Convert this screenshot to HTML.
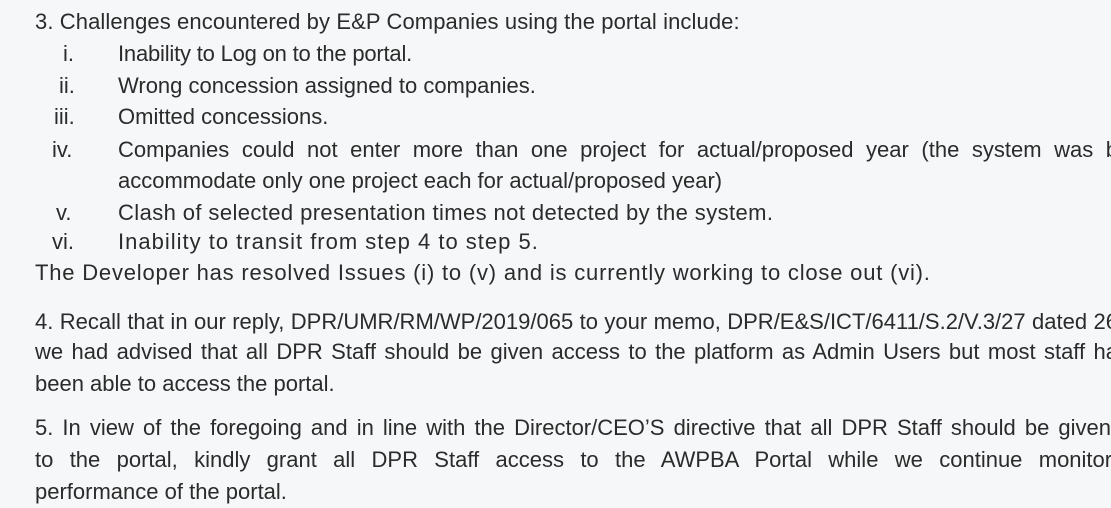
<!DOCTYPE html>
<html><head><meta charset="utf-8"><style>
html,body{margin:0;padding:0}
body{width:1111px;height:508px;overflow:hidden;background:#f6f7f8;position:relative;font-family:"Liberation Sans",sans-serif;font-size:22px;color:#2b2b2b}
.l{position:absolute;white-space:nowrap;line-height:24px}
.j{text-align:justify;text-align-last:justify}
.n{position:absolute;line-height:24px}
</style></head><body>
<div class="l" style="left:35px;top:10px;letter-spacing:0.1px">3. Challenges encountered by E&amp;P Companies using the portal include:</div>
<div class="n" style="left:63px;top:42px">i.</div><div class="l" style="left:118px;top:42px;letter-spacing:-0.2px">Inability to Log on to the portal.</div>
<div class="n" style="left:59px;top:74px">ii.</div><div class="l" style="left:118px;top:74px">Wrong concession assigned to companies.</div>
<div class="n" style="left:54px;top:105px">iii.</div><div class="l" style="left:118px;top:105px">Omitted concessions.</div>
<div class="n" style="left:52px;top:138px">iv.</div><div class="l j" style="left:118px;top:138px;width:1000px">Companies could not enter more than one project for actual/proposed year (the system was b</div>
<div class="l" style="left:118px;top:169px">accommodate only one project each for actual/proposed year)</div>
<div class="n" style="left:56px;top:201px">v.</div><div class="l" style="left:118px;top:201px;letter-spacing:0.4px">Clash of selected presentation times not detected by the system.</div>
<div class="n" style="left:52px;top:230px">vi.</div><div class="l" style="left:118px;top:230px;letter-spacing:1px">Inability to transit from step 4 to step 5.</div>
<div class="l" style="left:35px;top:261px;letter-spacing:0.8px">The Developer has resolved Issues (i) to (v) and is currently working to close out (vi).</div>
<div class="l j" style="left:35px;top:310px;width:1083px">4. Recall that in our reply, DPR/UMR/RM/WP/2019/065 to your memo, DPR/E&amp;S/ICT/6411/S.2/V.3/27 dated 26</div>
<div class="l j" style="left:35px;top:340px;width:1083px">we had advised that all DPR Staff should be given access to the platform as Admin Users but most staff ha</div>
<div class="l" style="left:35px;top:372px">been able to access the portal.</div>
<div class="l j" style="left:35px;top:416px;width:1076px">5. In view of the foregoing and in line with the Director/CEO’S directive that all DPR Staff should be given</div>
<div class="l j" style="left:35px;top:448px;width:1082px">to the portal, kindly grant all DPR Staff access to the AWPBA Portal while we continue monitori</div>
<div class="l" style="left:35px;top:480px">performance of the portal.</div>
</body></html>
